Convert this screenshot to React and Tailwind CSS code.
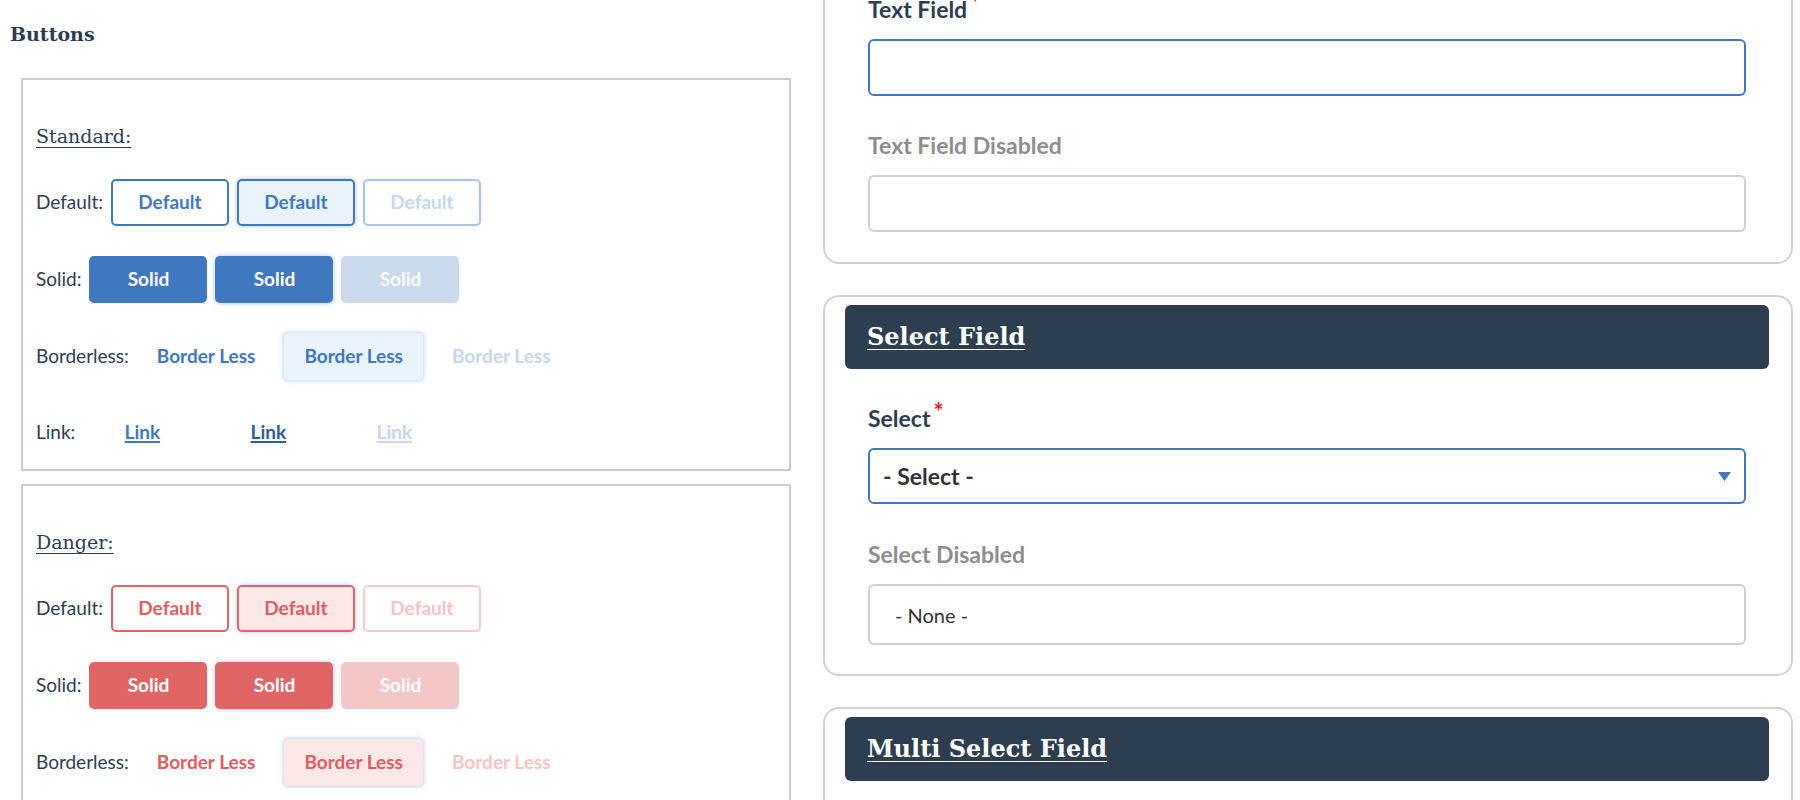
import React from "react";

const slab = { fontFamily: '"DejaVu Serif", "Liberation Serif", serif' };
const lato = { fontFamily: 'Lato, "Open Sans", "Liberation Sans", sans-serif' };

const base =
  "inline-flex items-center justify-center min-w-[118px] px-[20px] text-[19px] font-bold rounded-[5px] whitespace-nowrap";

const STYLES = {
  blue: {
    default: [
      "h-[47px] border-2 border-[#3f78bf] bg-white text-[#3f78bf]",
      "h-[47px] border-2 border-[#3f78bf] bg-[#e9f3fc] text-[#3f78bf] shadow-[0_0_5px_rgba(63,120,191,0.45)]",
      "h-[47px] border-2 border-[#a9c4e6] bg-white text-[#c6d7ee]",
    ],
    solid: [
      "h-[47px] bg-[#3f78bf] text-white",
      "h-[47px] bg-[#3f78bf] text-white shadow-[0_0_5px_rgba(63,120,191,0.45)]",
      "h-[47px] bg-[#cbdbed] text-white",
    ],
    borderless: [
      "h-[49px] text-[#3f78bf]",
      "h-[49px] bg-[#e9f3fc] text-[#3f78bf] border border-[#d9e7f6] shadow-[0_0_4px_rgba(63,120,191,0.3)]",
      "h-[49px] text-[#c6d7ee]",
    ],
    link: [
      "h-[47px] text-[#3f78bf] underline underline-offset-[2px] decoration-2",
      "h-[47px] text-[#2b5d99] underline underline-offset-[2px] decoration-2",
      "h-[47px] text-[#c6d7ee] underline underline-offset-[2px] decoration-2",
    ],
  },
  red: {
    default: [
      "h-[47px] border-2 border-[#e06666] bg-white text-[#e05d5d]",
      "h-[47px] border-2 border-[#e06666] bg-[#fde8e8] text-[#e05d5d] shadow-[0_0_5px_rgba(63,120,191,0.4)]",
      "h-[47px] border-2 border-[#f6cccc] bg-white text-[#f5c4c4]",
    ],
    solid: [
      "h-[47px] bg-[#e06666] text-white",
      "h-[47px] bg-[#e06666] text-white shadow-[0_0_5px_rgba(63,120,191,0.4)]",
      "h-[47px] bg-[#f4c7c7] text-white",
    ],
    borderless: [
      "h-[49px] text-[#e05d5d]",
      "h-[49px] bg-[#fde8e8] text-[#e05d5d] border border-[#dbe5f4] shadow-[0_0_4px_rgba(63,120,191,0.3)]",
      "h-[49px] text-[#f5c4c4]",
    ],
    link: [
      "h-[47px] text-[#e05d5d] underline underline-offset-[2px] decoration-2",
      "h-[47px] text-[#c24444] underline underline-offset-[2px] decoration-2",
      "h-[47px] text-[#f5c4c4] underline underline-offset-[2px] decoration-2",
    ],
  },
};

const ROWS = [
  { key: "default", label: "Default:", text: "Default", h: "h-[77px]" },
  { key: "solid", label: "Solid:", text: "Solid", h: "h-[77px]" },
  { key: "borderless", label: "Borderless:", text: "Border Less", h: "h-[77px]" },
  { key: "link", label: "Link:", text: "Link", h: "h-[74px]" },
];

function ButtonBox({ title, color, rows }) {
  return (
    <div className="w-[770px] border-2 border-[#cccccc] bg-white">
      <div className="h-[84px] pt-[44px] pl-[13px]">
        <span
          className="text-[19px] leading-[24px] text-[#2c3e50] underline underline-offset-[4px] decoration-1"
          style={slab}
        >
          {title}
        </span>
      </div>
      {rows.map((r) => (
        <div key={r.key} className={`flex items-center gap-[8px] pl-[13px] ${r.h}`} style={lato}>
          <span className="text-[19px] text-[#2c3e50]">{r.label}</span>
          {STYLES[color][r.key].map((cls, i) => (
            <button key={i} className={`${base} ${cls}`} style={lato}>
              {r.text}
            </button>
          ))}
        </div>
      ))}
    </div>
  );
}

function Label({ children, required, disabled }) {
  return (
    <div
      className={`h-[24px] whitespace-nowrap text-[23px] leading-[24px] font-bold ${disabled ? "text-[#8e8e8e]" : "text-[#2c3e50]"}`}
      style={lato}
    >
      {children}
      {required && <span className="relative -top-[6px] ml-[3px] text-[24px] text-[#ff1a1a]">*</span>}
    </div>
  );
}

function Header({ children }) {
  return (
    <div className="flex h-[64px] items-center rounded-[6px] bg-[#2c3e50] px-[22px]">
      {children && (
        <span
          className="text-[24px] font-bold text-white underline underline-offset-[4px] decoration-1"
          style={slab}
        >
          {children}
        </span>
      )}
    </div>
  );
}

function Card({ children, className = "" }) {
  return (
    <div className={`w-[970px] rounded-[16px] border-2 border-[#d2d2d2] bg-white pt-[8px] pl-[20px] pr-[22px] ${className}`}>
      {children}
    </div>
  );
}

export default function App() {
  return (
    <div className="flex h-[800px] w-[1800px] overflow-hidden bg-white">
      {/* Left column */}
      <div className="w-[800px] shrink-0">
        <div className="h-[78px] pt-[22px] pl-[10px]">
          <span className="text-[19px] font-bold leading-[24px] text-[#2c3e50]" style={slab}>
            Buttons
          </span>
        </div>
        <div className="flex flex-col gap-[13px] pl-[21px]">
          <ButtonBox title="Standard:" color="blue" rows={ROWS} />
          <ButtonBox title="Danger:" color="red" rows={ROWS.slice(0, 3)} />
        </div>
      </div>

      {/* Right column */}
      <div className="w-[1000px] shrink-0 pl-[23px] -mt-[114px]">
        <Card className="mb-[31px] pb-[30px]">
          <Header />
          <div className="px-[23px]">
            <div className="mt-[37px]">
              <Label required>Text Field</Label>
            </div>
            <div className="mt-[18px] h-[57px] rounded-[6px] border-2 border-[#3f78bf] bg-white"></div>
            <div className="mt-[37px]">
              <Label disabled>Text Field Disabled</Label>
            </div>
            <div className="mt-[18px] h-[57px] rounded-[6px] border-2 border-[#cfcfcf] bg-white"></div>
          </div>
        </Card>

        <Card className="mb-[31px] pb-[29px]">
          <Header>Select Field</Header>
          <div className="px-[23px]">
            <div className="mt-[37px]">
              <Label required>Select</Label>
            </div>
            <div
              className="mt-[18px] flex h-[56px] items-center justify-between rounded-[6px] border-2 border-[#3f78bf] bg-white pl-[13px] pr-[13px]"
              style={lato}
            >
              <span className="text-[23px] font-bold text-[#333333]">- Select -</span>
              <svg width="13" height="9" viewBox="0 0 13 9">
                <path d="M0 0 L13 0 L6.5 9 Z" fill="#3f78bf" />
              </svg>
            </div>
            <div className="mt-[38px]">
              <Label disabled>Select Disabled</Label>
            </div>
            <div
              className="mt-[18px] flex h-[61px] items-center rounded-[6px] border-2 border-[#cfcfcf] bg-white pl-[25px]"
              style={lato}
            >
              <span className="text-[20px] text-[#333333]">- None -</span>
            </div>
          </div>
        </Card>

        <Card className="pb-[29px]">
          <Header>Multi Select Field</Header>
          <div className="px-[23px]">
            <div className="mt-[37px]">
              <Label required>Multi Select</Label>
            </div>
            <div className="mt-[18px] h-[56px] rounded-[6px] border-2 border-[#3f78bf] bg-white"></div>
          </div>
        </Card>
      </div>
    </div>
  );
}
